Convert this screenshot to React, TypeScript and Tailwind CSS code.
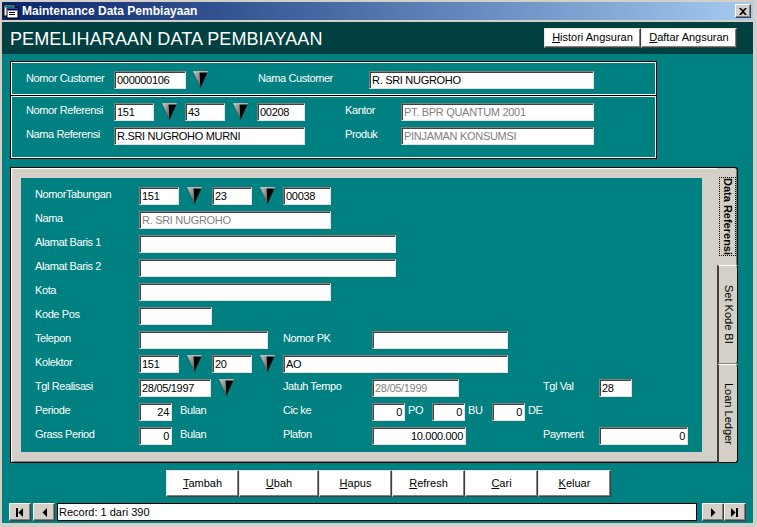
import type { ReactNode } from 'react'

const sunken =
  'h-[18px] shrink-0 bg-white border border-t-[#808080] border-l-[#808080] border-r-[#e4e1da] border-b-[#e4e1da] shadow-[inset_1px_1px_0_#404040] px-[2px] text-[11px] leading-[16px] tracking-[-0.3px] whitespace-nowrap overflow-hidden'

const raisedWhite =
  'bg-white border border-t-[#e8e6e0] border-l-[#e8e6e0] border-r-[#404040] border-b-[#404040] shadow-[inset_-1px_-1px_0_#808080] text-black text-[11px] flex items-center justify-center'

const Field = ({
  w,
  value = '',
  gray = false,
  right = false,
}: {
  w: string
  value?: string
  gray?: boolean
  right?: boolean
}) => (
  <div className={`${sunken} ${w} ${gray ? 'text-[#808080]' : 'text-black'} ${right ? 'text-right' : ''}`}>{value}</div>
)

const Label = ({ w, children, ml = '' }: { w: string; children: ReactNode; ml?: string }) => (
  <span className={`shrink-0 ${w} ${ml} text-white text-[11px] leading-[14px] tracking-[-0.4px] whitespace-nowrap`}>{children}</span>
)

// the little 3d "cone" drop-down markers
const Drop = ({ ml }: { ml: string }) => (
  <span className={`shrink-0 w-[15px] h-[18px] ${ml} flex items-start`}>
    <svg width="15" height="17" viewBox="0 0 15 17">
      <defs>
        <linearGradient id="cone" x1="0" y1="0" x2="1" y2="1">
          <stop offset="0" stopColor="#d0d0d0" />
          <stop offset="1" stopColor="#555" />
        </linearGradient>
      </defs>
      <polygon points="0,0 15,0 7.5,17" fill="#000" />
      <polygon points="0,0 6.5,0 7.5,17" fill="url(#cone)" />
      <polygon points="0,0 15,0 14.5,1.5 0.5,1.5" fill="#b8b8b8" />
    </svg>
  </span>
)

const Row = ({ children }: { children: ReactNode }) => <div className="flex items-start h-[18px]">{children}</div>

const NavBtn = ({ children }: { children: ReactNode }) => (
  <div className="w-[22px] h-[18px] bg-[#d4d0c8] border border-t-white border-l-white border-r-[#404040] border-b-[#404040] shadow-[inset_-1px_-1px_0_#808080] flex items-center justify-center">
    {children}
  </div>
)

const Btn = ({ w, u, rest }: { w: string; u: string; rest: string }) => (
  <div className={`${raisedWhite} ${w} h-[27px]`}>
    <span>
      <span className="underline">{u}</span>
      {rest}
    </span>
  </div>
)

const App = () => {
  return (
    <div className="w-[757px] h-[527px] bg-[#d4d0c8] pt-[2px] pl-[2px] pr-[4px] pb-[4px] flex flex-col font-['Liberation_Sans',Arial,sans-serif] overflow-hidden">
      {/* title bar */}
      <div className="h-[18px] shrink-0 flex items-center bg-gradient-to-r from-[#0a246a] to-[#a6caf0] pl-[1px] pr-[1px]">
        <svg width="16" height="16" viewBox="0 0 16 16" className="shrink-0">
          <rect x="1" y="2" width="11" height="11" fill="#fff" stroke="#000" />
          <rect x="1.5" y="2.5" width="10" height="2" fill="#008080" />
          <rect x="4" y="5" width="11" height="10" fill="#fff" stroke="#000" />
          <rect x="4.5" y="5.5" width="10" height="2" fill="#000080" />
          <rect x="6" y="9" width="6" height="1" fill="#000" />
          <rect x="6" y="11" width="6" height="1" fill="#000" />
        </svg>
        <span className="ml-[3px] text-white font-bold text-[12px] leading-[18px] whitespace-nowrap">Maintenance Data Pembiayaan</span>
        <div className="ml-auto mr-[1px] w-[16px] h-[14px] bg-[#d4d0c8] border border-t-white border-l-white border-r-[#404040] border-b-[#404040] shadow-[inset_-1px_-1px_0_#808080] flex items-center justify-center">
          <svg width="8" height="7" viewBox="0 0 8 7">
            <path d="M0 0 L2 0 L4 2 L6 0 L8 0 L5 3.5 L8 7 L6 7 L4 5 L2 7 L0 7 L3 3.5 Z" fill="#000" />
          </svg>
        </div>
      </div>

      {/* header */}
      <div className="mt-[2px] h-[32px] shrink-0 bg-[#004040] flex items-center pl-[8px] pr-[16px]">
        <span className="text-white text-[18px] leading-[20px] tracking-[0.1px] whitespace-nowrap mt-[2px]">PEMELIHARAAN DATA PEMBIAYAAN</span>
        <div className="ml-auto flex mb-[1px]">
          <div className={`${raisedWhite} w-[97px] h-[20px]`}>
            <span>
              <span className="underline">H</span>istori Angsuran
            </span>
          </div>
          <div className={`${raisedWhite} w-[96px] h-[20px]`}>
            <span>
              <span className="underline">D</span>aftar Angsuran
            </span>
          </div>
        </div>
      </div>

      {/* body */}
      <div className="flex-1 bg-[#008080] flex flex-col">
        {/* customer */}
        <div className="ml-[8px] mt-[7px] w-[647px]">
          <div className="h-[35px] border border-black shadow-[inset_1px_1px_0_#fff,inset_-1px_-1px_0_#fff] pl-[15px] pt-[9px]">
            <Row>
              <Label w="w-[88px]">Nomor Customer</Label>
              <Field w="w-[72px]" value="000000106" />
              <Drop ml="ml-[7px]" />
              <Label w="w-[111px]" ml="ml-[50px]">
                Nama Customer
              </Label>
              <Field w="w-[225px]" value="R. SRI NUGROHO" />
            </Row>
          </div>
          <div className="h-[63px] border border-t-0 border-black shadow-[inset_1px_1px_0_#fff,inset_-1px_-1px_0_#fff] pl-[15px] pt-[7px] flex flex-col gap-[6px]">
            <Row>
              <Label w="w-[88px]">Nomor Referensi</Label>
              <Field w="w-[40px]" value="151" />
              <Drop ml="ml-[8px]" />
              <span className="w-[8px] shrink-0" />
              <Field w="w-[40px]" value="43" />
              <Drop ml="ml-[8px]" />
              <span className="w-[9px] shrink-0" />
              <Field w="w-[48px]" value="00208" />
              <Label w="w-[56px]" ml="ml-[40px]">
                Kantor
              </Label>
              <Field w="w-[193px]" value="PT. BPR QUANTUM 2001" gray />
            </Row>
            <Row>
              <Label w="w-[88px]">Nama Referensi</Label>
              <Field w="w-[191px]" value="R.SRI NUGROHO MURNI" />
              <Label w="w-[56px]" ml="ml-[40px]">
                Produk
              </Label>
              <Field w="w-[193px]" value="PINJAMAN KONSUMSI" gray />
            </Row>
          </div>
        </div>

        {/* tab control */}
        <div className="ml-[8px] mt-[8px] h-[296px] flex">
          <div className="w-[707px] h-full bg-[#d4d0c8] border border-r-0 border-black shadow-[inset_1px_1px_0_#fff,inset_0_-1px_0_#808080] pl-[10px] pt-[10px] pr-[15px] pb-[10px]">
            <div className="h-full bg-[#008080] pl-[14px] pt-[9px] flex flex-col gap-[6px]">
              <Row>
                <Label w="w-[104px]">NomorTabungan</Label>
                <Field w="w-[40px]" value="151" />
                <Drop ml="ml-[8px]" />
                <span className="w-[10px] shrink-0" />
                <Field w="w-[40px]" value="23" />
                <Drop ml="ml-[8px]" />
                <span className="w-[8px] shrink-0" />
                <Field w="w-[48px]" value="00038" />
              </Row>
              <Row>
                <Label w="w-[104px]">Nama</Label>
                <Field w="w-[192px]" value="R. SRI NUGROHO" gray />
              </Row>
              <Row>
                <Label w="w-[104px]">Alamat Baris 1</Label>
                <Field w="w-[257px]" />
              </Row>
              <Row>
                <Label w="w-[104px]">Alamat Baris 2</Label>
                <Field w="w-[257px]" />
              </Row>
              <Row>
                <Label w="w-[104px]">Kota</Label>
                <Field w="w-[192px]" />
              </Row>
              <Row>
                <Label w="w-[104px]">Kode Pos</Label>
                <Field w="w-[73px]" />
              </Row>
              <Row>
                <Label w="w-[104px]">Telepon</Label>
                <Field w="w-[129px]" />
                <Label w="w-[89px]" ml="ml-[15px]">
                  Nomor PK
                </Label>
                <Field w="w-[136px]" />
              </Row>
              <Row>
                <Label w="w-[104px]">Kolektor</Label>
                <Field w="w-[40px]" value="151" />
                <Drop ml="ml-[8px]" />
                <span className="w-[10px] shrink-0" />
                <Field w="w-[40px]" value="20" />
                <Drop ml="ml-[8px]" />
                <span className="w-[8px] shrink-0" />
                <Field w="w-[225px]" value="AO" />
              </Row>
              <Row>
                <Label w="w-[104px]">Tgl Realisasi</Label>
                <Field w="w-[72px]" value="28/05/1997" />
                <Drop ml="ml-[8px]" />
                <Label w="w-[89px]" ml="ml-[49px]">
                  Jatuh Tempo
                </Label>
                <Field w="w-[87px]" value="28/05/1999" gray />
                <Label w="w-[56px]" ml="ml-[84px]">
                  Tgl Val
                </Label>
                <Field w="w-[33px]" value="28" />
              </Row>
              <Row>
                <Label w="w-[104px]">Periode</Label>
                <Field w="w-[33px]" value="24" right />
                <Label w="w-[103px]" ml="ml-[8px]">
                  Bulan
                </Label>
                <Label w="w-[89px]">Cic ke</Label>
                <Field w="w-[33px]" value="0" right />
                <Label w="w-[24px]" ml="ml-[3px]">
                  PO
                </Label>
                <Field w="w-[33px]" value="0" right />
                <Label w="w-[24px]" ml="ml-[3px]">
                  BU
                </Label>
                <Field w="w-[33px]" value="0" right />
                <Label w="w-[24px]" ml="ml-[3px]">
                  DE
                </Label>
              </Row>
              <Row>
                <Label w="w-[104px]">Grass Period</Label>
                <Field w="w-[33px]" value="0" right />
                <Label w="w-[103px]" ml="ml-[8px]">
                  Bulan
                </Label>
                <Label w="w-[89px]">Plafon</Label>
                <Field w="w-[94px]" value="10.000.000" right />
                <Label w="w-[56px]" ml="ml-[77px]">
                  Payment
                </Label>
                <Field w="w-[89px]" value="0" right />
              </Row>
            </div>
          </div>

          {/* vertical tabs */}
          <div className="w-[21px] h-full flex flex-col">
            <div className="h-[98px] shrink-0 bg-[#d4d0c8] border-t border-r border-black rounded-tr-[3px] shadow-[inset_-1px_0_0_#808080] flex items-center justify-center">
              <span className="[writing-mode:vertical-rl] text-[11px] font-bold text-black leading-[13px] border border-dotted border-black py-[1px]">
                Data Referensi
              </span>
            </div>
            <div className="h-[99px] shrink-0 bg-[#d4d0c8] border-l-2 border-l-[#404040] border-t border-t-white border-r border-r-black border-b border-b-[#808080] rounded-r-[3px] flex items-center justify-center">
              <span className="[writing-mode:vertical-rl] text-[11px] text-black leading-[13px]">Set Kode BI</span>
            </div>
            <div className="flex-1 bg-[#d4d0c8] border-l-2 border-l-[#404040] border-t border-t-white border-r border-r-black border-b border-b-black rounded-r-[3px] flex items-center justify-center">
              <span className="[writing-mode:vertical-rl] text-[11px] text-black leading-[13px]">Loan Ledger</span>
            </div>
          </div>
        </div>

        {/* action buttons */}
        <div className="ml-[164px] mt-[7px] flex">
          <Btn w="w-[73px]" u="T" rest="ambah" />
          <Btn w="w-[80px]" u="U" rest="bah" />
          <Btn w="w-[73px]" u="H" rest="apus" />
          <Btn w="w-[73px]" u="R" rest="efresh" />
          <Btn w="w-[73px]" u="C" rest="ari" />
          <Btn w="w-[73px]" u="K" rest="eluar" />
        </div>

        {/* record navigator */}
        <div className="ml-[7px] mt-[6px] flex items-center h-[18px]">
          <NavBtn>
            <svg width="8" height="9" viewBox="0 0 8 9">
              <rect x="0" y="0" width="2" height="9" fill="#000" />
              <polygon points="7,0 7,9 2.5,4.5" fill="#000" />
            </svg>
          </NavBtn>
          <div className="ml-[2px]">
            <NavBtn>
              <svg width="5" height="9" viewBox="0 0 5 9">
                <polygon points="5,0 5,9 0.5,4.5" fill="#000" />
              </svg>
            </NavBtn>
          </div>
          <div className="ml-[2px] w-[640px] h-[18px] bg-white border border-black text-[11px] leading-[16px] text-black pl-[1px]">
            Record: 1 dari 390
          </div>
          <div className="ml-[5px]">
            <NavBtn>
              <svg width="5" height="9" viewBox="0 0 5 9">
                <polygon points="0,0 0,9 4.5,4.5" fill="#000" />
              </svg>
            </NavBtn>
          </div>
          <NavBtn>
            <svg width="8" height="9" viewBox="0 0 8 9">
              <polygon points="0,0 0,9 4.5,4.5" fill="#000" />
              <rect x="5" y="0" width="2" height="9" fill="#000" />
            </svg>
          </NavBtn>
        </div>
      </div>
    </div>
  )
}

export default App
